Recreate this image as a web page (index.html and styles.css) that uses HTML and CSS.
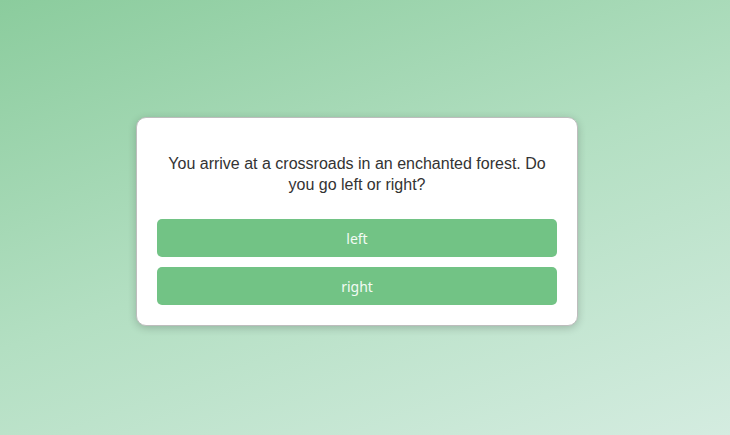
FILE: index.html
```html
<!DOCTYPE html>
<html>
<head>
<meta charset="utf-8">
<link rel="stylesheet" href="styles.css">
</head>
<body>
<main class="stage">
  <section class="card">
    <p class="question">You arrive at a crossroads in an enchanted forest. Do you go left or right?</p>
    <div class="choices">
      <button class="choice">left</button>
      <button class="choice">right</button>
    </div>
  </section>
</main>
</body>
</html>
```

FILE: styles.css
```css
html, body {
  margin: 0;
  height: 100%;
}
body {
  background: linear-gradient(160deg, #8bcc9d 0%, #b3dfc2 50%, #d4ece0 100%);
  font-family: "Liberation Sans", Arial, sans-serif;
}
.stage {
  height: 100%;
  box-sizing: border-box;
  padding-right: 16px;
  display: flex;
  align-items: center;
  justify-content: center;
}
.card {
  width: 400px;
  padding: 20px;
  background: #fff;
  border: 1px solid #bdbdbd;
  border-radius: 10px;
  box-shadow: 0 2px 8px rgba(0, 0, 0, 0.2);
  margin-top: 8px;
}
.question {
  margin: 15px 0 24px;
  font-size: 16px;
  line-height: 21px;
  color: #333;
  text-align: center;
}
.choices {
  display: flex;
  flex-direction: column;
  gap: 10px;
}
.choice {
  height: 38px;
  border: none;
  border-radius: 5px;
  background: #72c385;
  color: #f3fbf4;
  font-family: "Noto Sans", "Open Sans", sans-serif;
  font-size: 14px;
  cursor: pointer;
}
```
